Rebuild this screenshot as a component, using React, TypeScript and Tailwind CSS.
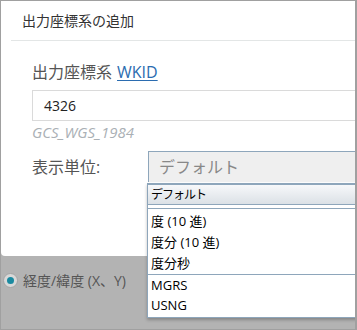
const FONT = { fontFamily: '"Open Sans", "Noto Sans CJK JP", sans-serif' }

const GROUP1 = ['度 (10 進)', '度分 (10 進)', '度分秒']
const GROUP2 = ['MGRS', 'USNG']

export default function App() {
  return (
    <div style={FONT} className="relative w-[357px] h-[330px] overflow-hidden bg-[#b3b3b3] border-t border-l border-b border-r-2 border-[#a0a0a0]">
      {/* dialog */}
      <div className="h-[255px] bg-white rounded-bl-[4px]">
        <div className="h-[39px] flex items-center pl-[21px] text-[14px] text-[#333]">出力座標系の追加</div>
        <div className="ml-[10px] h-px bg-[#e3e6e6]" />
        <div className="pl-[31px]">
          <div className="mt-[19px] h-[24px] flex items-center text-[16px] text-[#555]">
            出力座標系<span className="ml-[5px] text-[#2b6cb0] underline underline-offset-2">WKID</span>
          </div>
          <div className="mt-[6px] h-[31px] border border-r-0 border-[#dadada] flex items-center pl-[11px] text-[14px] text-[#222]">4326</div>
          <div className="h-[22px] flex items-center italic text-[15px] text-[#aab0b5]">GCS_WGS_1984</div>
          <div className="mt-[8px] flex items-center">
            <div className="w-[116px] text-[16px] text-[#555] pt-[1px]">表示単位:</div>
            <div className="flex-1 h-[31px] bg-[#efefef] border-t border-l border-[#8ea6bb] flex items-center pl-[10px] text-[16px] text-[#888]">デフォルト</div>
          </div>
        </div>
      </div>

      {/* behind the dialog */}
      <div className="mt-[14px] flex items-center pl-[2px] text-[14px] text-[#555]">
        <span className="w-[15px] h-[15px] rounded-full border border-[#a4a4a4] bg-[#d8d8d8] flex items-center justify-center">
          <span className="w-[7px] h-[7px] rounded-full bg-[#1b8aa0]" />
        </span>
        <span className="ml-[5px]">経度/緯度 (X、Y)</span>
      </div>

      {/* open dropdown list */}
      <div className="absolute left-[146px] top-[182px] w-[230px] bg-white border-t-2 border-l border-b border-[#8ea6bb] shadow-[0_2px_3px_rgba(0,0,0,0.25)] text-[13px] text-black">
        <div className="h-[19px] flex items-center pl-[3px] bg-gradient-to-b from-[#f7f8fa] to-[#dbe1e6] tracking-[-1px] text-[12px]">デフォルト</div>
        <div className="h-px bg-[#8ea6bb]" />
        <div className="h-[3px]" />
        <div className="h-px bg-[#8ea6bb]" />
        <div className="pt-[2px]">
          {GROUP1.map(t => (
            <div key={t} className="h-[21px] flex items-center pl-[3px]">{t}</div>
          ))}
        </div>
        <div className="h-px bg-[#8ea6bb]" />
        <div className="pt-[1px] pb-[1px]">
          {GROUP2.map(t => (
            <div key={t} className="h-[20px] flex items-center pl-[3px]">{t}</div>
          ))}
        </div>
      </div>
    </div>
  )
}
